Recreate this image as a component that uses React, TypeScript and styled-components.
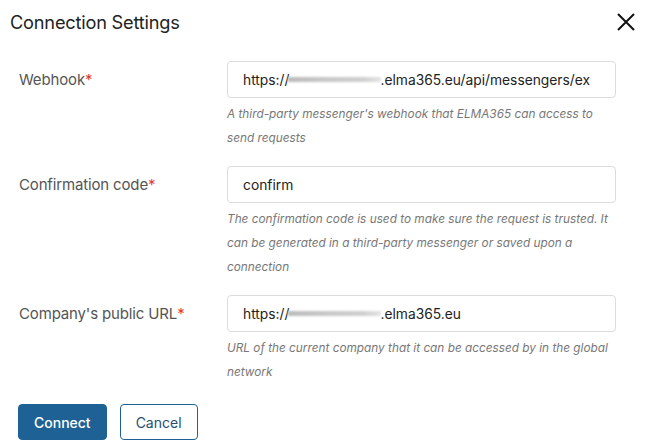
import React from "react";
import styled, { createGlobalStyle } from "styled-components";

const GlobalStyle = createGlobalStyle`
  body {
    margin: 0;
    background: #fff;
    font-family: Inter, "Noto Sans", sans-serif;
  }
`;

const Dialog = styled.div`
  width: 645px;
  height: 447px;
  background: #fff;
  box-sizing: border-box;
`;

const Header = styled.div`
  display: flex;
  align-items: center;
  justify-content: space-between;
  height: 44px;
  padding: 0 4px 0 10px;
`;

const Title = styled.h2`
  margin: 0;
  font-size: 18.2px;
  font-weight: 400;
  color: #222;
  letter-spacing: -0.2px;
`;

const CloseButton = styled.button`
  width: 30px;
  height: 30px;
  border: none;
  background: none;
  padding: 0;
  display: flex;
  align-items: center;
  justify-content: center;
  cursor: pointer;
`;

const Body = styled.div`
  padding: 17px 29px 0 19px;
  display: flex;
  flex-direction: column;
  gap: 16px;
`;

const Row = styled.div`
  display: grid;
  grid-template-columns: 208px 389px;
`;

const Label = styled.label`
  height: 37px;
  display: flex;
  align-items: center;
  font-size: 15px;
  color: #555;
  letter-spacing: -0.15px;
`;

const Required = styled.span`
  color: #e53935;
`;

const Field = styled.div`
  display: flex;
  flex-direction: column;
`;

const InputBox = styled.div`
  height: 37px;
  box-sizing: border-box;
  border: 1px solid #dcdcdc;
  border-radius: 4px;
  padding: 0 15px;
  display: flex;
  align-items: center;
  font-size: 13.8px;
  color: #222;
  white-space: nowrap;
  overflow: hidden;
`;

const Blur = styled.span<{ $w: number }>`
  display: inline-block;
  width: ${(p) => p.$w}px;
  height: 5px;
  margin: 0 0 0 -2px;
  background: linear-gradient(90deg, #bbb, #c8c8c8 40%, #cfcfcf 80%, #e4e4e4);
  filter: blur(1.2px);
  vertical-align: middle;
`;

const Hint = styled.p`
  margin: 4px 0 0;
  font-size: 11.8px;
  line-height: 24px;
  font-style: italic;
  color: #777;
`;

const Footer = styled.div`
  display: flex;
  gap: 13px;
  padding: 0 0 0 18px;
  margin-top: 20px;
`;

const Button = styled.button<{ $primary?: boolean }>`
  height: 36px;
  box-sizing: border-box;
  border-radius: 4px;
  font-family: Inter, "Noto Sans", sans-serif;
  font-size: 14px;
  padding: 0 15px;
  cursor: pointer;
  border: 1px solid #1e6295;
  background: ${(p) => (p.$primary ? "#1e6295" : "#fff")};
  color: ${(p) => (p.$primary ? "#fff" : "#2b4d70")};
  font-weight: ${(p) => (p.$primary ? 500 : 400)};
`;

const fields = [
  {
    label: "Webhook",
    value: (
      <>
        https://<Blur $w={93} />.elma365.eu/api/messengers/ex
      </>
    ),
    hint: "A third-party messenger's webhook that ELMA365 can access to send requests",
  },
  {
    label: "Confirmation code",
    value: "confirm",
    hint: "The confirmation code is used to make sure the request is trusted. It can be generated in a third-party messenger or saved upon a connection",
  },
  {
    label: "Company's public URL",
    value: (
      <>
        https://<Blur $w={93} />.elma365.eu
      </>
    ),
    hint: "URL of the current company that it can be accessed by in the global network",
  },
];

export default function App() {
  return (
    <>
      <GlobalStyle />
      <Dialog>
        <Header>
          <Title>Connection Settings</Title>
          <CloseButton aria-label="Close">
            <svg width="18" height="18" viewBox="0 0 18 18">
              <path d="M1 1L17 17M17 1L1 17" stroke="#111" strokeWidth="2" />
            </svg>
          </CloseButton>
        </Header>
        <Body>
          {fields.map((f) => (
            <Row key={f.label}>
              <Label>
                {f.label}
                <Required>*</Required>
              </Label>
              <Field>
                <InputBox>{f.value}</InputBox>
                <Hint>{f.hint}</Hint>
              </Field>
            </Row>
          ))}
        </Body>
        <Footer>
          <Button $primary>Connect</Button>
          <Button>Cancel</Button>
        </Footer>
      </Dialog>
    </>
  );
}
